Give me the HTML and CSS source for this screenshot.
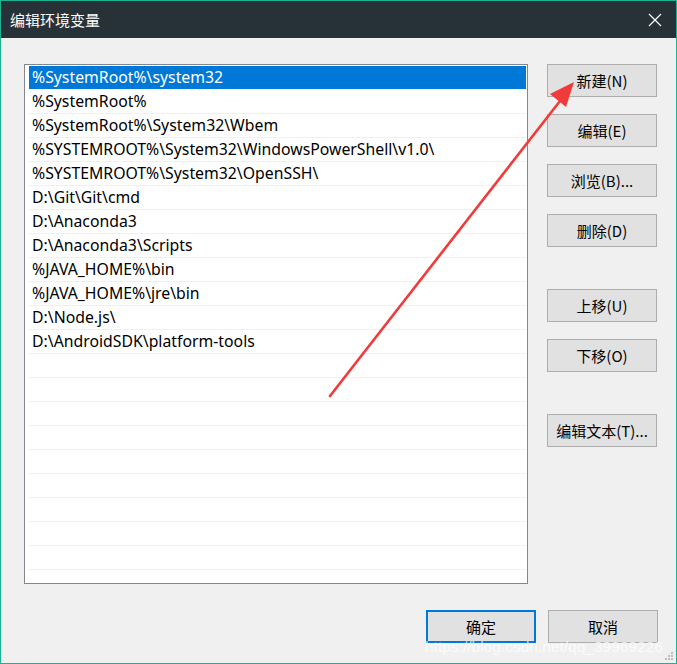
FILE: index.html
```html
<!DOCTYPE html>
<html lang="zh-CN">
<head>
<meta charset="utf-8">
<title>编辑环境变量</title>
<link rel="stylesheet" href="styles.css">
</head>
<body>
<div class="window">
  <div class="titlebar">
    <span class="title">编辑环境变量</span>
    <svg class="close" width="14" height="14" viewBox="0 0 14 14"><path d="M1 1L13 13M13 1L1 13" stroke="#ffffff" stroke-width="1.2" fill="none"/></svg>
  </div>
  <div class="content">
    <div class="main">
      <div class="listbox">
        <div class="row selected">%SystemRoot%\system32</div>
        <div class="row">%SystemRoot%</div>
        <div class="row">%SystemRoot%\System32\Wbem</div>
        <div class="row">%SYSTEMROOT%\System32\WindowsPowerShell\v1.0\</div>
        <div class="row">%SYSTEMROOT%\System32\OpenSSH\</div>
        <div class="row">D:\Git\Git\cmd</div>
        <div class="row">D:\Anaconda3</div>
        <div class="row">D:\Anaconda3\Scripts</div>
        <div class="row">%JAVA_HOME%\bin</div>
        <div class="row">%JAVA_HOME%\jre\bin</div>
        <div class="row">D:\Node.js\</div>
        <div class="row">D:\AndroidSDK\platform-tools</div>
        <div class="row"></div>
        <div class="row"></div>
        <div class="row"></div>
        <div class="row"></div>
        <div class="row"></div>
        <div class="row"></div>
        <div class="row"></div>
        <div class="row"></div>
        <div class="row"></div>
      </div>
      <div class="buttons">
        <div class="group">
          <button class="btn">新建(N)</button>
          <button class="btn">编辑(E)</button>
          <button class="btn">浏览(B)...</button>
          <button class="btn">删除(D)</button>
        </div>
        <div class="group g2">
          <button class="btn">上移(U)</button>
          <button class="btn">下移(O)</button>
        </div>
        <div class="group g3">
          <button class="btn">编辑文本(T)...</button>
        </div>
      </div>
    </div>
    <div class="footer">
      <button class="btn default">确定</button>
      <button class="btn">取消</button>
    </div>
  </div>
  <svg class="arrow" width="677" height="664" viewBox="0 0 677 664">
    <line x1="330" y1="396" x2="560" y2="101" stroke="#f23a3a" stroke-width="2.6" stroke-linecap="round"/>
    <polygon points="574,82 566,107 550,94" fill="#f23a3a"/>
  </svg>
  <div class="watermark">https://blog.csdn.net/qq_39969226</div>
  <svg class="grip" width="10" height="10" viewBox="0 0 10 10">
    <rect x="7" y="1" width="2" height="2" fill="#bdbdbd"/>
    <rect x="4" y="4" width="2" height="2" fill="#bdbdbd"/>
    <rect x="7" y="4" width="2" height="2" fill="#bdbdbd"/>
    <rect x="1" y="7" width="2" height="2" fill="#bdbdbd"/>
    <rect x="4" y="7" width="2" height="2" fill="#bdbdbd"/>
    <rect x="7" y="7" width="2" height="2" fill="#bdbdbd"/>
  </svg>
</div>
</body>
</html>
```
FILE: styles.css
```css
* { box-sizing: border-box; }
html, body { margin: 0; padding: 0; }
body {
  width: 677px;
  height: 664px;
  overflow: hidden;
  font-family: "Noto Sans", "Noto Sans CJK SC", sans-serif;
}
.window {
  position: relative;
  width: 677px;
  height: 664px;
  border: 1px solid #1cb394;
  background: #f0f0f0;
  display: flex;
  flex-direction: column;
}
.titlebar {
  height: 37px;
  background: #263238;
  display: flex;
  align-items: center;
  justify-content: space-between;
  padding: 0 14px 0 9px;
  flex: none;
}
.title {
  color: #ffffff;
  font-family: "Noto Sans CJK SC", sans-serif;
  font-size: 15px;
  line-height: 18px;
  margin-top: 1px;
}
.close { display: block; margin-top: 1px; }
.content {
  flex: 1;
  padding: 26px 18px 0 23px;
  display: flex;
  flex-direction: column;
}
.main {
  display: flex;
  gap: 19px;
}
.listbox {
  width: 504px;
  height: 520px;
  background: #ffffff;
  border: 1px solid #828790;
  padding: 1px 1px 0 4px;
  overflow: hidden;
}
.row {
  height: 24px;
  border-bottom: 1px solid #f0f0f0;
  font-size: 15.8px;
  line-height: 22px;
  color: #000000;
  padding-left: 3px;
  white-space: nowrap;
  overflow: hidden;
}
.row.selected {
  background: #0078d7;
  color: #ffffff;
  border-bottom-color: #ffffff;
}
.buttons {
  display: flex;
  flex-direction: column;
  width: 110px;
}
.group {
  display: flex;
  flex-direction: column;
  gap: 17px;
}
.group.g2 { margin-top: 42px; }
.group.g3 { margin-top: 42px; }
.btn {
  width: 110px;
  height: 33px;
  background: #e1e1e1;
  border: 1px solid #adadad;
  font-family: "Noto Sans CJK SC", sans-serif;
  font-size: 15px;
  color: #000000;
  padding: 0;
  margin: 0;
}
.btn.default {
  border: 2px solid #0078d7;
}
.footer {
  display: flex;
  justify-content: flex-end;
  gap: 12px;
  margin-top: 26px;
}
.arrow {
  position: absolute;
  left: -1px;
  top: -1px;
  pointer-events: none;
}
.watermark {
  position: absolute;
  left: 424px;
  top: 637px;
  font-family: "Liberation Sans", sans-serif;
  font-size: 15.5px;
  color: rgba(255, 255, 255, 0.75);
  white-space: nowrap;
}
.grip {
  position: absolute;
  right: 2px;
  bottom: 2px;
}
```
